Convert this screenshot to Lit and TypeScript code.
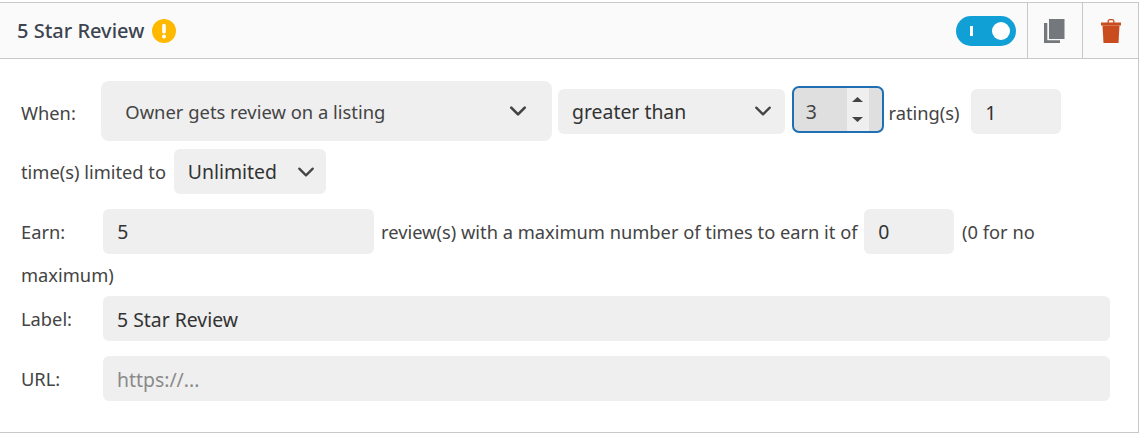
import { LitElement, html, css } from "lit";
import { customElement } from "lit/decorators.js";

const chevron = (w: number, sw: number) => html`<svg class="chev" width=${w} height=${w} viewBox="0 0 16 16" fill="none" stroke="currentColor" stroke-width=${sw} stroke-linecap="round" stroke-linejoin="round"><path d="M2 5l6 6 6-6"/></svg>`;

@customElement("app-root")
export class AppRoot extends LitElement {
  static styles = css`
    :host { display: block; font-family: "Noto Sans", sans-serif; font-size: 18.3px; color: #444; padding-top: 2px; }
    * { box-sizing: border-box; }
    .card { width: 1139px; height: 431px; border: 1px solid #c8c8c8; border-left: 0; background: #fff; }
    .head { height: 56px; background: #fafafa; border-bottom: 1px solid #c8c8c8; display: flex; align-items: center; padding-left: 17px; }
    .title { font-size: 20px; font-weight: 500; color: #3d4450; }
    .warn { margin-left: 8px; width: 24px; height: 24px; display: block; }
    .actions { margin-left: auto; display: flex; align-self: stretch; }
    .toggle-cell { display: flex; align-items: center; padding-right: 11px; }
    .toggle { width: 60px; height: 30px; border-radius: 15px; background: #11a0d5; position: relative; display: block; }
    .toggle i { position: absolute; left: 14px; top: 10px; width: 3px; height: 10px; background: #fff; }
    .toggle b { position: absolute; right: 6px; top: 6px; width: 18px; height: 18px; border-radius: 50%; background: #fff; }
    .icon-cell { width: 55px; border-left: 1px solid #c8c8c8; display: flex; align-items: center; justify-content: center; }
    .icon-cell.last { width: 56px; }
    .body { padding: 18px 20px 0 21px; line-height: 30px; }
    .flow { display: block; }
    .lab { display: inline-block; width: 75.5px; }
    .lab.e { width: 77.5px; }
    input, select { font: inherit; color: #333; background: #efefef; border: 0; border-radius: 6px; outline: 0; font-size: 19.4px; padding: 0 14px; height: 45px; margin: 0; }
    input::placeholder { color: #8a8a8a; opacity: 1; }
    .sel { display: inline-block; position: relative; }
    .sel select { appearance: none; display: block; width: 100%; }
    .sel .chev { position: absolute; top: 50%; transform: translateY(-50%); color: #444; pointer-events: none; }
    .when { width: 451px; margin: 4px 1px 4px 0; vertical-align: 1px; }
    .when select { height: 60px; font-size: 18.4px; padding: 2px 14px 0 24px; border-radius: 8px; color: #444; }
    .when .chev { right: 25px; }
    .cmp { width: 227px; margin: 4px 2px 4px 0; vertical-align: 1px; }
    .cmp select { padding-top: 2px; }
    .cmp .chev { right: 13px; }
    .unl { width: 152px; margin: 4px 0 4px 3px; }
    .unl .chev { right: 11px; }
    .num { display: inline-flex; width: 92px; height: 47px; border: 2px solid #1f6fb2; border-radius: 7px; background: #dfdfdf; padding-right: 13px; margin: 4px 0; vertical-align: 1px; }
    .num span { flex: 1; padding-left: 12px; font-size: 19.4px; line-height: 47px; height: 43px; color: #444; }
    .spin { width: 22px; background: #efefef; display: flex; flex-direction: column; align-items: center; justify-content: space-between; padding: 9px 0; }
    .tri { display: block; }
    .ratio { width: 90px; margin: 4px 0 4px 7px; padding-top: 2px; }
    .earn { width: 271px; margin: 0 2px 0 0; }
    .max { width: 90px; margin: 0 3px 0 2px; }
    .full { width: 1007px; padding-top: 2px; }
    .field { display: flex; align-items: center; height: 45px; margin-bottom: 15px; }
    .field .lab { width: 82px; }
    .wrap-txt { line-height: 42px; margin-top: 11px; }
  `;

  render() {
    return html`<div class="card">
      <div class="head">
        <span class="title">5 Star Review</span>
        <svg class="warn" viewBox="0 0 24 24"><circle cx="12" cy="12" r="12" fill="#ffb900"/><rect x="10.2" y="5" width="3.6" height="9.5" rx="1.4" fill="#fff"/><circle cx="12" cy="17.6" r="2" fill="#fff"/></svg>
        <div class="actions">
          <div class="toggle-cell"><span class="toggle"><i></i><b></b></span></div>
          <div class="icon-cell"><svg width="22" height="24" viewBox="0 0 22 24" fill="#74777b"><path d="M5 0h15.500v20H5z"/><path d="M0 4h3.300v17.300h12.700V24H0z"/></svg></div>
          <div class="icon-cell last"><svg width="20" height="24" viewBox="0 0 20 24" fill="#c94c1e"><path d="M0 3.500h20v3H0z"/><path d="M1.500 6.500h17l-1 17.500h-15z"/><path d="M6.500 4V2.500a2.500 2.500 0 0 1 2.500-2.500h2a2.500 2.500 0 0 1 2.500 2.500V4h-1.300V2.500a1.200 1.200 0 0 0-1.200-1.200H9a1.200 1.200 0 0 0-1.200 1.200V4z"/></svg></div>
        </div>
      </div>
      <div class="body">
        <div class="flow">
          <span class="lab">When:</span>
          <span class="sel when"><select><option>Owner gets review on a listing</option></select>${chevron(18, 2.4)}</span>
          <span class="sel cmp"><select><option>greater than</option></select>${chevron(18, 2)}</span>
          <span class="num"><span>3</span><div class="spin">
            <svg class="tri" width="11" height="5" viewBox="0 0 11 5"><path d="M5.500 0l5.500 5H0z" fill="#444"/></svg>
            <svg class="tri" width="11" height="5" viewBox="0 0 11 5"><path d="M0 0h11L5.500 5z" fill="#444"/></svg>
          </div></span>
          rating(s)
          <input class="ratio" type="text" value="1">
          time(s) limited to
          <span class="sel unl"><select><option>Unlimited</option></select>${chevron(18, 2)}</span>
        </div>
        <div class="flow wrap-txt">
          <span class="lab e">Earn:</span>
          <input class="earn" type="text" value="5">
          review(s) with a maximum number of times to earn it of
          <input class="max" type="text" value="0">
          (0 for no maximum)
        </div>
        <div class="field"><span class="lab">Label:</span><input class="full" type="text" value="5 Star Review"></div>
        <div class="field"><span class="lab">URL:</span><input class="full" type="text" placeholder="https://..."></div>
      </div>
    </div>`;
  }
}
